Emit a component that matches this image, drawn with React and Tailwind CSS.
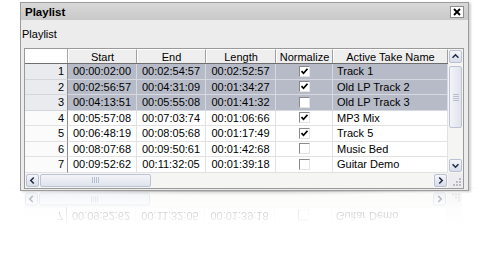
import React from 'react'

const rows = [
  ['1', '00:00:02:00', '00:02:54:57', '00:02:52:57', true, 'Track 1'],
  ['2', '00:02:56:57', '00:04:31:09', '00:01:34:27', true, 'Old LP Track 2'],
  ['3', '00:04:13:51', '00:05:55:08', '00:01:41:32', false, 'Old LP Track 3'],
  ['4', '00:05:57:08', '00:07:03:74', '00:01:06:66', true, 'MP3 Mix'],
  ['5', '00:06:48:19', '00:08:05:68', '00:01:17:49', true, 'Track 5'],
  ['6', '00:08:07:68', '00:09:50:61', '00:01:42:68', false, 'Music Bed'],
  ['7', '00:09:52:62', '00:11:32:05', '00:01:39:18', false, 'Guitar Demo'],
]

function Check({ on }) {
  return (
    <div className="w-[11px] h-[11px] bg-white border-t border-l border-[#8a8a8a] border-r border-b border-r-[#e4e4e4] border-b-[#e4e4e4] flex items-center justify-center">
      {on && (
        <svg width="9" height="9" viewBox="0 0 9 9">
          <path d="M1.5 4.2 L3.5 6.3 L7.5 1.8" stroke="#000" strokeWidth="1.7" fill="none" />
        </svg>
      )}
    </div>
  )
}

function Row({ r, sel }) {
  const cell = sel
    ? 'bg-[#b7bbc8] border-r border-b border-[#d6d9e0]'
    : 'bg-white border-r border-b border-[#e2e2e2]'
  return (
    <div className="flex h-[15.5px] leading-[15px]">
      <div className={'w-[43px] text-right pr-[3px] border-b border-r border-r-[#8c8c8c] ' + (sel ? 'bg-[#e9ebef] border-b-[#d4d6dc]' : 'bg-[#fbfbfb] border-b-[#e2e2e2]')}>
        {r[0]}
      </div>
      <div className={'w-[69px] text-center ' + cell}>{r[1]}</div>
      <div className={'w-[69px] text-center ' + cell}>{r[2]}</div>
      <div className={'w-[70px] text-center ' + cell}>{r[3]}</div>
      <div className={'w-[57px] flex items-center justify-center ' + cell}>
        <Check on={r[4]} />
      </div>
      <div className={'w-[115px] pl-[4px] whitespace-nowrap ' + cell}>{r[5]}</div>
    </div>
  )
}

function Arrow({ dir }) {
  const d = {
    up: 'M3 8 L6.5 4.5 L10 8',
    down: 'M3 5 L6.5 8.5 L10 5',
    left: 'M8 3 L4.5 6.5 L8 10',
    right: 'M5 3 L8.5 6.5 L5 10',
  }[dir]
  return (
    <div className="w-[15px] h-[15px] p-[1px]">
      <div className="w-full h-full rounded-[2px] border border-[#b9c1d3] bg-gradient-to-b from-[#f4f6fa] to-[#d9dde8] flex items-center justify-center">
        <svg width="13" height="13" viewBox="0 0 13 13">
          <path d={d} stroke="#1f2a44" strokeWidth="1.8" fill="none" />
        </svg>
      </div>
    </div>
  )
}

function Grip({ vertical }) {
  return (
    <div className={'flex gap-[1px] ' + (vertical ? 'flex-col' : 'flex-row')}>
      {[0, 1, 2, 3].map(i => (
        <div key={i} className={vertical ? 'w-[6px] h-[1px] bg-[#b8bfcf]' : 'w-[1px] h-[6px] bg-[#b8bfcf]'} />
      ))}
    </div>
  )
}

function HScroll() {
  return (
    <div className="flex h-[15px] bg-[#f5f5f3]">
      <Arrow dir="left" />
      <div className="w-[111px] h-[15px] py-[1px]">
        <div className="h-full rounded-[2px] border border-[#bcc3d4] bg-gradient-to-b from-[#f3f4f8] to-[#dfe3ec] flex items-center justify-center">
          <Grip />
        </div>
      </div>
      <div className="flex-1" />
      <Arrow dir="right" />
    </div>
  )
}

function SizeGrip() {
  return (
    <div className="w-[15px] h-[15px] bg-[#ededed] relative">
      <svg width="15" height="15" viewBox="0 0 15 15" className="absolute inset-0">
        {[[11, 5], [11, 8], [8, 8], [11, 11], [8, 11], [5, 11]].map(([x, y], i) => (
          <rect key={i} x={x} y={y} width="2" height="2" fill="#b9bcc4" />
        ))}
      </svg>
    </div>
  )
}

// reflected strip under the window: last row + scrollbar
function Bottom() {
  return (
    <div className="flex w-[438px] bg-white">
      <div className="flex flex-col w-[423px]">
        <Row r={rows[6]} sel={false} />
        <HScroll />
      </div>
      <div className="w-[15px] flex flex-col bg-[#f5f5f3]">
        <div className="flex-1" />
        <SizeGrip />
      </div>
    </div>
  )
}

export default function App() {
  return (
    <div className="w-[490px] h-[254px] bg-white relative overflow-hidden font-['Liberation_Sans',Arial,sans-serif] text-[11px] text-black">
      <div className="absolute left-[4px] top-[187px] w-[482px] h-[9px] bg-[radial-gradient(ellipse_at_center_top,rgba(0,0,0,0.3),rgba(0,0,0,0)_70%)]" />
      <div className="pt-[2px] pl-[20px] relative">
        <div className="w-[449px] h-[189px] border border-[#9c9c9c] bg-[#ececec] flex flex-col shadow-[2px_1px_2px_rgba(0,0,0,0.18)]">
          <div className="h-[17px] bg-gradient-to-b from-[#d8d8d8] to-[#c9c9c9] flex items-center justify-between pl-[4px] pr-[4px]">
            <span className="font-bold text-[11.5px] leading-[14px]">Playlist</span>
            <div className="w-[14px] h-[12px] bg-white border border-[#8e8e8e] flex items-center justify-center">
              <svg width="8" height="8" viewBox="0 0 8 8">
                <path d="M1 1 L7 7 M7 1 L1 7" stroke="#000" strokeWidth="1.8" />
              </svg>
            </div>
          </div>
          <div className="h-[28px] pl-[1px] pt-[8px] leading-[13px]">Playlist</div>
          <div className="ml-[3px] w-[440px] border border-[#9a9a9a] bg-white flex">
            <div className="flex flex-col w-[423px]">
              <div className="flex h-[15px] leading-[14px] border-b border-[#6f6f6f]">
                <div className="w-[43px] bg-white border-r border-[#a8a8a8]" />
                {[['Start', 'w-[69px]'], ['End', 'w-[69px]'], ['Length', 'w-[70px]'], ['Normalize', 'w-[57px]'], ['Active Take Name', 'w-[115px]']].map(([t, w]) => (
                  <div key={t} className={w + ' text-center bg-[#eeeeee] border-r border-[#9f9f9f] border-t border-l border-t-white border-l-white whitespace-nowrap'}>
                    {t}
                  </div>
                ))}
              </div>
              {rows.map((r, i) => (
                <Row key={r[0]} r={r} sel={i < 3} />
              ))}
              <HScroll />
            </div>
            <div className="w-[15px] flex flex-col bg-[#f5f5f3]">
              <Arrow dir="up" />
              <div className="h-[64px] px-[1px] pt-[2px]">
                <div className="h-full rounded-[2px] border border-[#bcc3d4] bg-gradient-to-r from-[#f3f4f8] to-[#dfe3ec] flex items-center justify-center">
                  <Grip vertical />
                </div>
              </div>
              <div className="flex-1" />
              <Arrow dir="down" />
              <SizeGrip />
            </div>
          </div>
        </div>
        <div className="ml-[4px] mt-[1px] h-[31px] overflow-hidden opacity-40 [mask-image:linear-gradient(to_bottom,rgba(0,0,0,1),rgba(0,0,0,0.15))]">
          <div className="-scale-y-100">
            <Bottom />
          </div>
        </div>
      </div>
    </div>
  )
}
